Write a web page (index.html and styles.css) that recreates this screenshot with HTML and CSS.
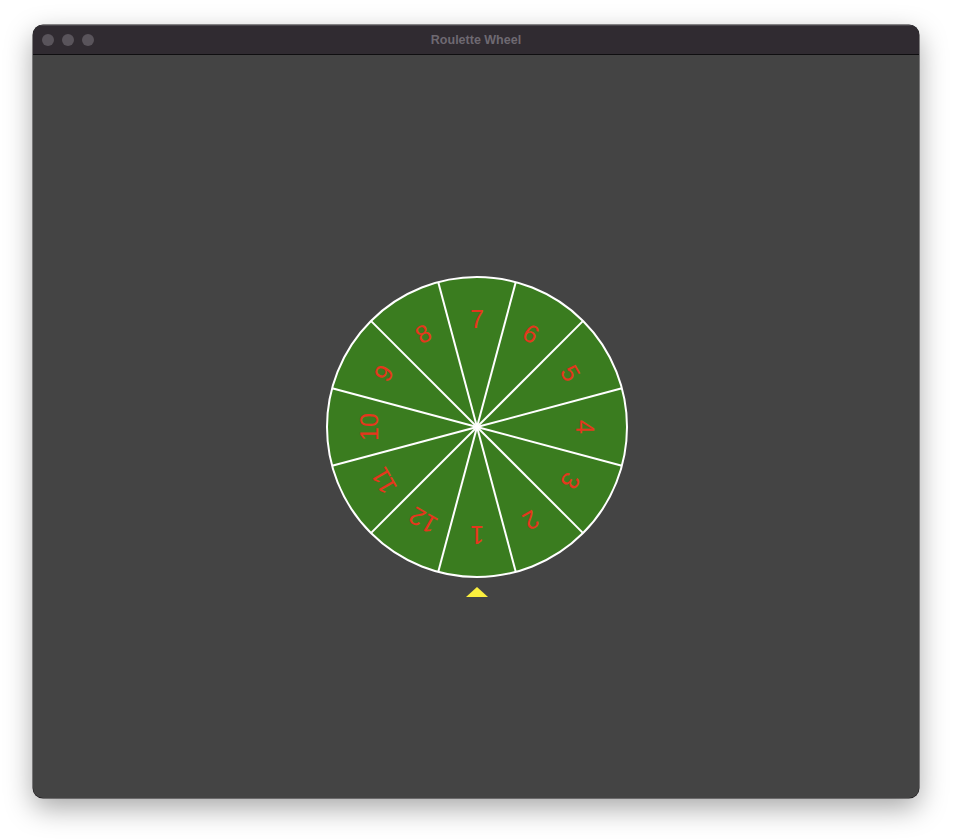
FILE: index.html
```html
<!DOCTYPE html>
<html>
<head>
<meta charset="utf-8">
<link rel="stylesheet" href="styles.css">
</head>
<body>
<div class="window">
  <div class="titlebar">
    <div class="lights"><span class="light"></span><span class="light"></span><span class="light"></span></div>
    <div class="title">Roulette Wheel</div>
  </div>
  <div class="content">
    <svg class="wheel" width="304" height="304" viewBox="-152 -152 304 304">
      <circle cx="0" cy="0" r="150" fill="#3a7c1f" stroke="#ffffff" stroke-width="2"/>
      <g stroke="#ffffff" stroke-width="2">
        <line x1="0" y1="0" x2="144.9" y2="38.8"/>
        <line x1="0" y1="0" x2="106.1" y2="106.1"/>
        <line x1="0" y1="0" x2="38.8" y2="144.9"/>
        <line x1="0" y1="0" x2="-38.8" y2="144.9"/>
        <line x1="0" y1="0" x2="-106.1" y2="106.1"/>
        <line x1="0" y1="0" x2="-144.9" y2="38.8"/>
        <line x1="0" y1="0" x2="-144.9" y2="-38.8"/>
        <line x1="0" y1="0" x2="-106.1" y2="-106.1"/>
        <line x1="0" y1="0" x2="-38.8" y2="-144.9"/>
        <line x1="0" y1="0" x2="38.8" y2="-144.9"/>
        <line x1="0" y1="0" x2="106.1" y2="-106.1"/>
        <line x1="0" y1="0" x2="144.9" y2="-38.8"/>
      </g>
      <g class="nums" font-family="Liberation Sans, Arial, sans-serif" font-size="25" fill="#e5361d" text-anchor="middle">
        <text class="num" transform="rotate(180) translate(0,-108)" y="9">1</text>
        <text class="num" transform="rotate(150) translate(0,-108)" y="9">2</text>
        <text class="num" transform="rotate(120) translate(0,-108)" y="9">3</text>
        <text class="num" transform="rotate(90) translate(0,-108)" y="9">4</text>
        <text class="num" transform="rotate(60) translate(0,-108)" y="9">5</text>
        <text class="num" transform="rotate(30) translate(0,-108)" y="9">6</text>
        <text class="num" transform="rotate(0) translate(0,-108)" y="9">7</text>
        <text class="num" transform="rotate(-30) translate(0,-108)" y="9">8</text>
        <text class="num" transform="rotate(-60) translate(0,-108)" y="9">9</text>
        <text class="num" transform="rotate(-90) translate(0,-108)" y="9">10</text>
        <text class="num" transform="rotate(-120) translate(0,-108)" y="9">11</text>
        <text class="num" transform="rotate(-150) translate(0,-108)" y="9">12</text>
      </g>
      <polygon points="0,160 11,170 -11,170" fill="#fbef3e"/>
    </svg>
  </div>
</div>
</body>
</html>
```

FILE: styles.css
```css
html, body {
  margin: 0;
  padding: 0;
  background: #ffffff;
}
body {
  width: 953px;
  height: 840px;
  padding: 25px 0 0 33px;
  box-sizing: border-box;
}
.window {
  width: 886px;
  height: 773px;
  border-radius: 10px;
  overflow: hidden;
  background: #444444;
  box-shadow: 0 0 0 0.5px #1c1a1d, 0 10px 28px rgba(0,0,0,0.35);
  display: flex;
  flex-direction: column;
}
.titlebar {
  flex: none;
  background: #302b31;
  border-top: 1px solid #4a464c;
  border-bottom: 1px solid #0f0e10;
  box-sizing: border-box;
  height: 30px;
  position: relative;
  display: flex;
  align-items: center;
}
.lights {
  display: flex;
  gap: 8px;
  padding-left: 9px;
}
.light {
  width: 12px;
  height: 12px;
  border-radius: 50%;
  background: #59545b;
}
.title {
  position: absolute;
  left: 0;
  right: 0;
  top: 0;
  bottom: 0;
  display: flex;
  align-items: center;
  justify-content: center;
  font-family: "Liberation Sans", Arial, sans-serif;
  font-weight: bold;
  font-size: 12.5px;
  color: #6e6971;
}
.content {
  flex: 1;
  display: flex;
  align-items: center;
  justify-content: center;
}
.wheel {
  overflow: visible;
  display: block;
  margin-left: 2px;
}
.num {
  font-family: "Liberation Sans", "DejaVu Sans", sans-serif;
  font-size: 25px;
  fill: #e5361d;
}
```
